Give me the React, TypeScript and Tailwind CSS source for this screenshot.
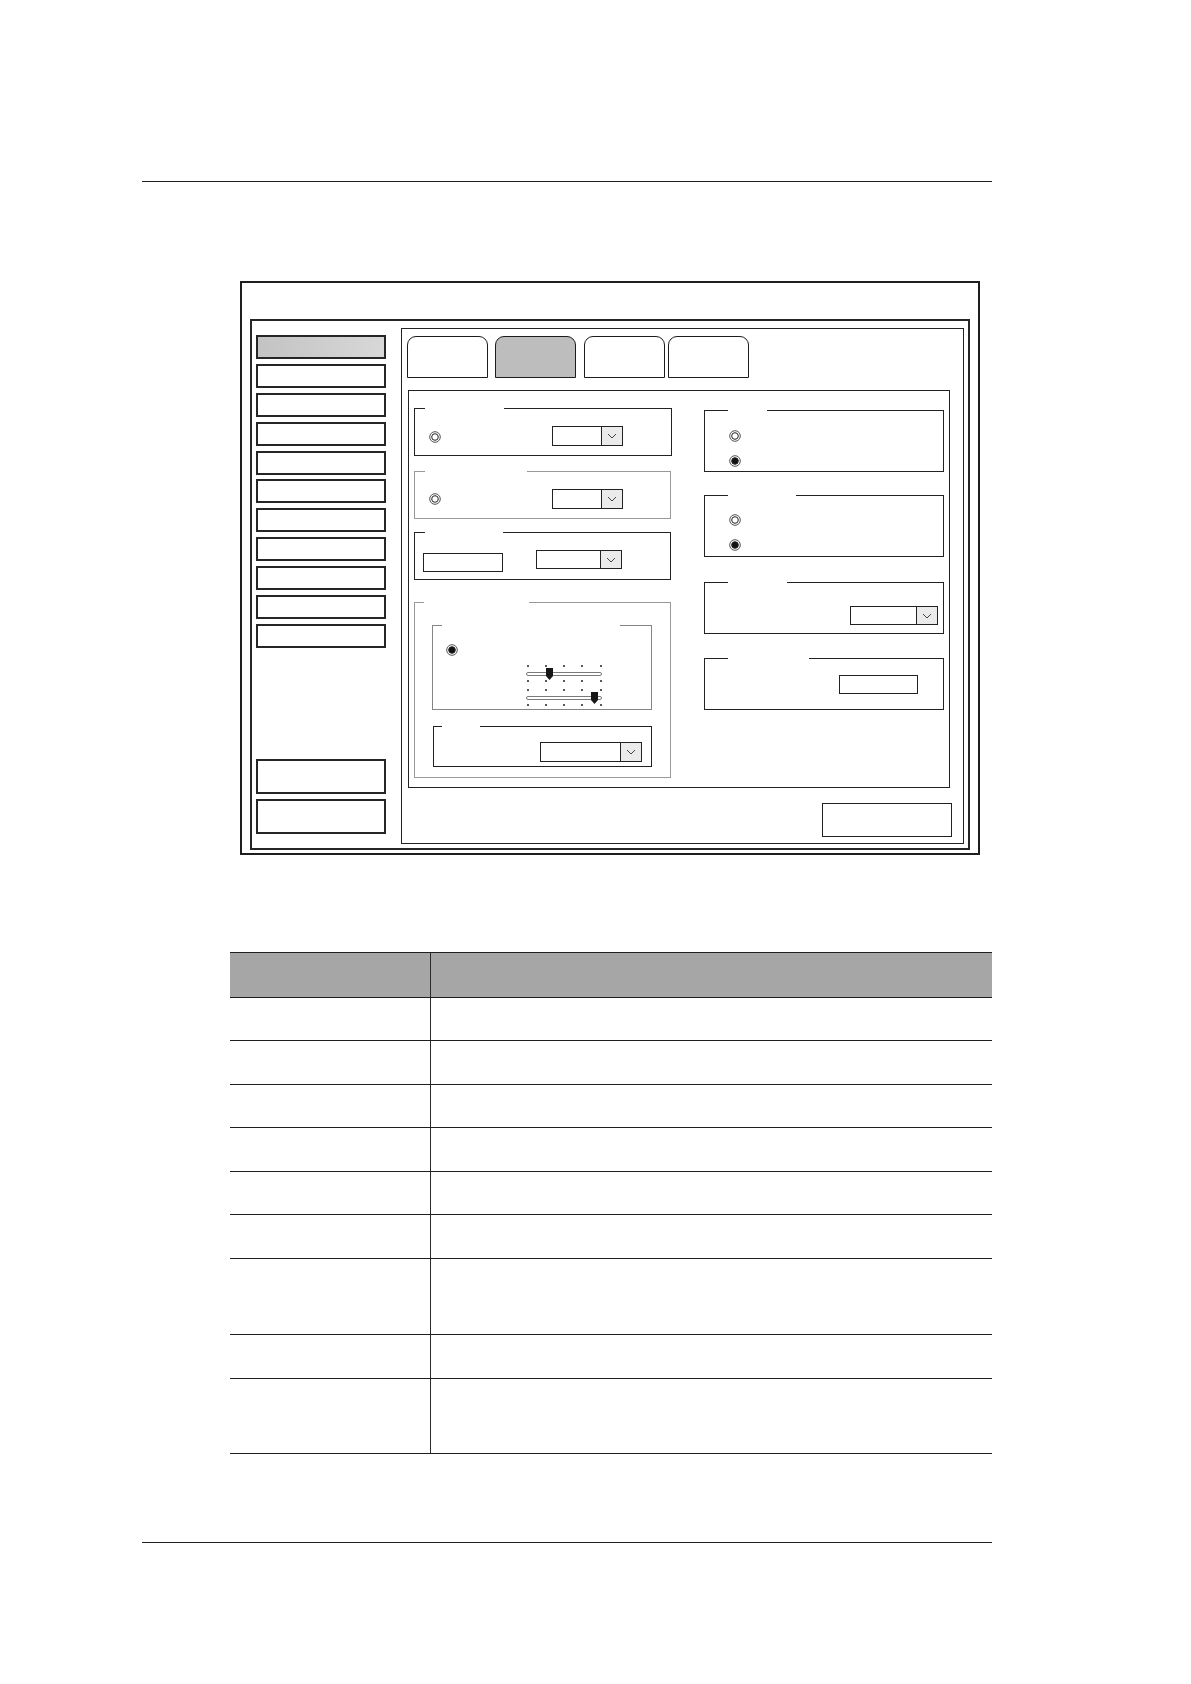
import React from "react";

type Tone = "dark" | "gray" | "mid";

function Group({
  lead,
  gap,
  tone = "dark",
  className,
  children,
}: {
  lead: string;
  gap: string;
  tone?: Tone;
  className: string;
  children?: React.ReactNode;
}) {
  const border =
    tone === "dark" ? "border-[#222]" : tone === "gray" ? "border-[#999]" : "border-[#858585]";
  const bg = tone === "dark" ? "bg-[#222]" : tone === "gray" ? "bg-[#999]" : "bg-[#858585]";
  return (
    <div className={`flex shrink-0 flex-col border-x border-b ${border} ${className}`}>
      <div className="flex h-px shrink-0">
        <div className={`h-px shrink-0 ${bg} ${lead}`} />
        <div className={`h-px shrink-0 ${gap}`} />
        <div className={`h-px flex-1 ${bg}`} />
      </div>
      {children}
    </div>
  );
}

function Radio({ filled = false, className = "" }: { filled?: boolean; className?: string }) {
  return (
    <svg className={`block shrink-0 ${className}`} width="12" height="12" viewBox="0 0 12 12">
      <circle cx="6" cy="6" r="5.3" fill="white" stroke="#555" strokeWidth="1" />
      <circle cx="6" cy="6" r="3.3" fill={filled ? "#111" : "white"} stroke="#222" strokeWidth="1" />
    </svg>
  );
}

function Select({ className }: { className: string }) {
  return (
    <div className={`flex shrink-0 border border-[#222] bg-white ${className}`}>
      <div className="flex-1" />
      <div className="flex w-[21px] items-center justify-center border-l border-[#222] bg-[#ebebeb]">
        <svg width="10" height="6" viewBox="0 0 10 6">
          <polyline points="1,1 5,5 9,1" fill="none" stroke="#444" strokeWidth="1" />
        </svg>
      </div>
    </div>
  );
}

function Dots() {
  return (
    <div className="flex h-[2px] justify-between px-[0.5px]">
      {[0, 1, 2, 3, 4].map((i) => (
        <div key={i} className="h-[2px] w-[2px] rounded-full bg-[#222]" />
      ))}
    </div>
  );
}

function Slider({ thumb, className = "" }: { thumb: string; className?: string }) {
  return (
    <div className={`relative w-[76px] ${className}`}>
      <Dots />
      <div className="mt-[5px] h-[4px] rounded-full border border-[#7a7a7a] bg-white" />
      <div className="mt-[4px]">
        <Dots />
      </div>
      <svg className={`absolute top-[3px] ${thumb}`} width="7" height="12" viewBox="0 0 7 12">
        <polygon points="0,0 7,0 7,8 3.5,12 0,8" fill="#161616" />
      </svg>
    </div>
  );
}

function SideButton({ active = false, tall = false }: { active?: boolean; tall?: boolean }) {
  return (
    <div
      className={`w-[130px] border-2 border-[#262626] ${tall ? "h-[35px]" : "h-[24px]"} ${
        active ? "bg-linear-to-r from-[#c3c3c3] to-[#d8d8d8]" : "bg-white"
      }`}
    />
  );
}

function Tab({ active = false, className = "" }: { active?: boolean; className?: string }) {
  return (
    <div
      className={`h-[42px] w-[81px] shrink-0 rounded-t-[9px] border border-[#1c1c1c] ${
        active ? "bg-[#bdbdbd]" : "bg-white"
      } ${className}`}
    />
  );
}

const rows = [
  "h-[43px]",
  "h-[44px]",
  "h-[43px]",
  "h-[44px]",
  "h-[43px]",
  "h-[44px]",
  "h-[76px]",
  "h-[44px]",
  "h-[75px]",
];

export default function App() {
  return (
    <div className="flex h-[1684px] w-[1191px] flex-col bg-white pt-[181px] font-['Liberation_Sans',sans-serif]">
      <div className="ml-[142px] h-px w-[850px] bg-[#231f20]" />

      {/* Outer window frame */}
      <div className="ml-[240px] mt-[99px] h-[574px] w-[740px] border-2 border-[#1e1e1e] pl-[8px] pt-[36px]">
        <div className="flex h-[531px] w-[720px] border-2 border-[#262626]">
          {/* Sidebar */}
          <div className="ml-[4px] flex w-[130px] flex-col justify-between pb-[14px] pt-[14px]">
            <div className="flex flex-col gap-[4.9px]">
              <SideButton active />
              <SideButton />
              <SideButton />
              <SideButton />
              <SideButton />
              <SideButton />
              <SideButton />
              <SideButton />
              <SideButton />
              <SideButton />
              <SideButton />
            </div>
            <div className="flex flex-col gap-[5px]">
              <SideButton tall />
              <SideButton tall />
            </div>
          </div>

          {/* Content panel */}
          <div className="ml-[15px] mt-[7px] flex h-[516px] w-[563px] flex-col self-start border border-[#222]">
            <div className="ml-[5px] mt-[7px] flex">
              <Tab />
              <Tab active className="ml-[7px]" />
              <Tab className="ml-[8px]" />
              <Tab className="ml-[3px]" />
            </div>

            <div className="ml-[6px] mt-[12px] flex h-[398px] w-[542px] border border-[#222]">
              {/* Left column */}
              <div className="ml-[5px] flex flex-col">
                <Group lead="w-[10px]" gap="w-[79px]" className="mt-[17px] h-[48px] w-[258px]">
                  <div className="flex items-start">
                    <Radio className="ml-[14px] mt-[22px]" />
                    <Select className="ml-[111px] mt-[17px] h-[20px] w-[71px]" />
                  </div>
                </Group>
                <Group lead="w-[10px]" gap="w-[102px]" tone="gray" className="mt-[15px] h-[48px] w-[257px]">
                  <div className="flex items-start">
                    <Radio className="ml-[14px] mt-[21px]" />
                    <Select className="ml-[111px] mt-[17px] h-[20px] w-[71px]" />
                  </div>
                </Group>
                <Group lead="w-[10px]" gap="w-[78px]" className="mt-[13px] h-[48px] w-[257px]">
                  <div className="flex items-start">
                    <div className="ml-[8px] mt-[20px] h-[19px] w-[80px] shrink-0 border border-[#222]" />
                    <Select className="ml-[33px] mt-[17px] h-[19px] w-[86px]" />
                  </div>
                </Group>
                <Group lead="w-[9px]" gap="w-[105px]" tone="gray" className="mt-[22px] h-[176px] w-[257px]">
                  <Group lead="w-[9px]" gap="w-[178px]" tone="mid" className="ml-[17px] mt-[22px] h-[85px] w-[220px]">
                    <div className="flex items-start">
                      <Radio filled className="ml-[13px] mt-[18px]" />
                      <div className="ml-[68px] mt-[39px] flex flex-col">
                        <Slider thumb="left-[20px]" />
                        <Slider thumb="left-[65px]" className="mt-[7px]" />
                      </div>
                    </div>
                  </Group>
                  <Group lead="w-[8px]" gap="w-[38px]" className="ml-[18px] mt-[16px] h-[41px] w-[219px]">
                    <Select className="ml-[106px] mt-[15px] h-[20px] w-[102px]" />
                  </Group>
                </Group>
              </div>

              {/* Right column */}
              <div className="ml-[32px] flex flex-col">
                <Group lead="w-[23px]" gap="w-[39px]" className="mt-[19px] h-[62px] w-[240px]">
                  <Radio className="ml-[24px] mt-[19px]" />
                  <Radio filled className="ml-[24px] mt-[13px]" />
                </Group>
                <Group lead="w-[23px]" gap="w-[68px]" className="mt-[23px] h-[62px] w-[240px]">
                  <Radio className="ml-[24px] mt-[18px]" />
                  <Radio filled className="ml-[24px] mt-[13px]" />
                </Group>
                <Group lead="w-[23px]" gap="w-[59px]" className="mt-[25px] h-[52px] w-[240px]">
                  <Select className="ml-[145px] mt-[23px] h-[19px] w-[88px]" />
                </Group>
                <Group lead="w-[23px]" gap="w-[81px]" className="mt-[24px] h-[52px] w-[240px]">
                  <div className="ml-[134px] mt-[16px] h-[19px] w-[79px] border border-[#222]" />
                </Group>
              </div>
            </div>

            <div className="mr-[11px] mt-[15px] h-[34px] w-[130px] self-end border border-[#222]" />
          </div>
        </div>
      </div>

      {/* Table */}
      <div className="ml-[230px] mt-[97px] w-[762px]">
        <div className="flex h-[46px] border-y border-[#1f1f1f] bg-[#a6a6a6]">
          <div className="w-[201px] border-r border-[#2b2b2b]" />
          <div className="flex-1" />
        </div>
        {rows.map((h, i) => (
          <div key={i} className={`flex border-b border-[#1f1f1f] ${h}`}>
            <div className="w-[201px] border-r border-[#2b2b2b]" />
            <div className="flex-1" />
          </div>
        ))}
      </div>

      <div className="ml-[142px] mt-[88px] h-px w-[850px] bg-[#231f20]" />
    </div>
  );
}
